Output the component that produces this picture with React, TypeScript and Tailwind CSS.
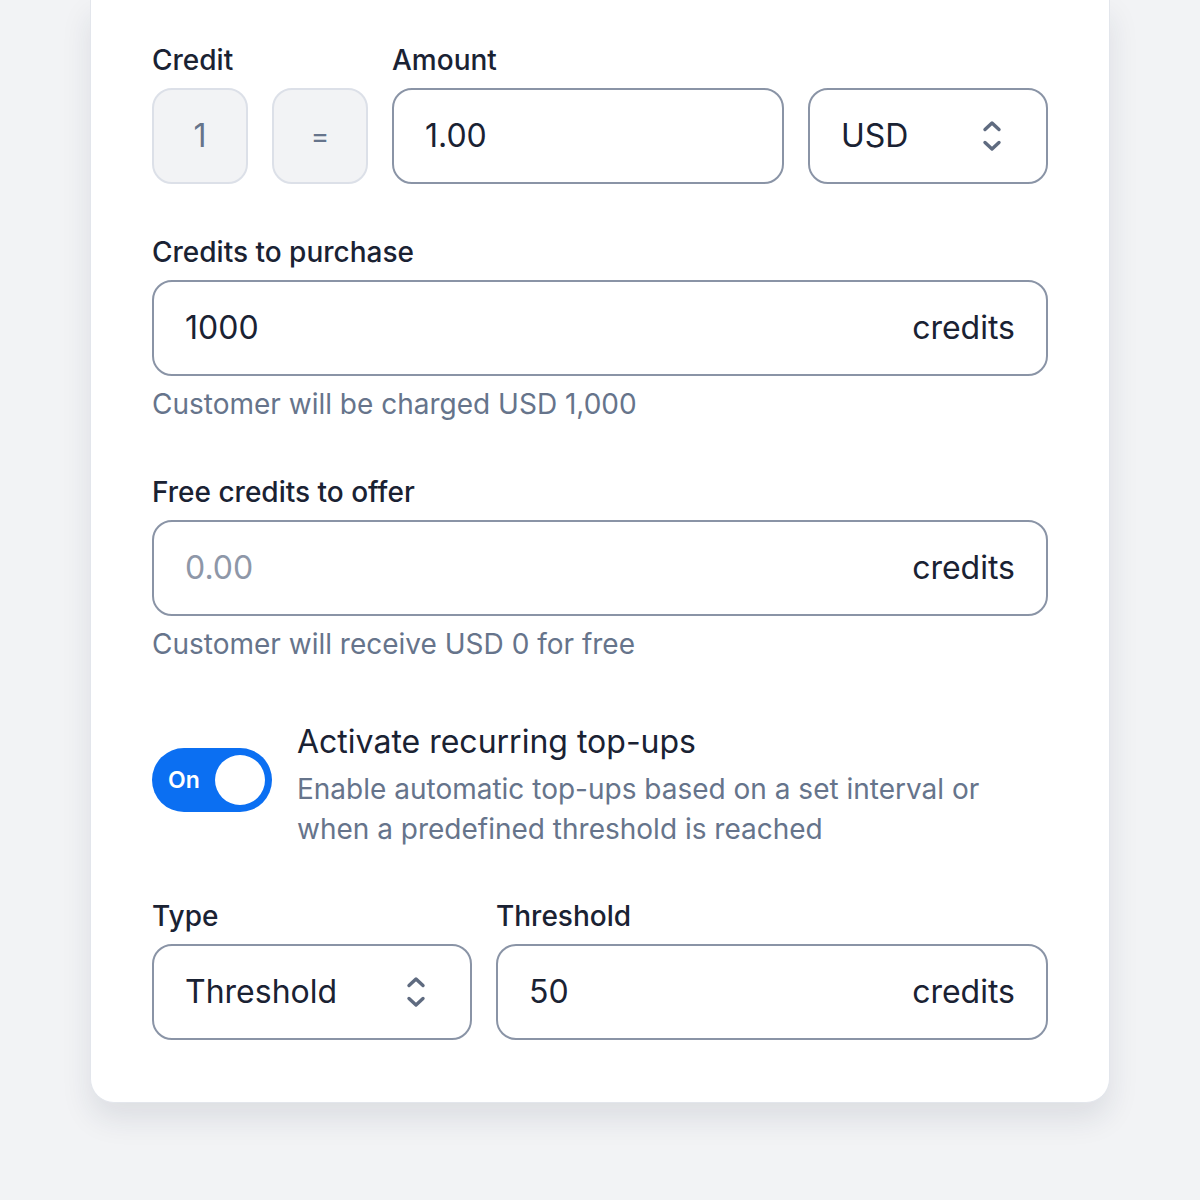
function UpDown() {
  return (
    <svg width="20" height="32" viewBox="0 0 20 32" fill="none" stroke="#5f6b80" strokeWidth="3.4" strokeLinecap="round" strokeLinejoin="round">
      <polyline points="3,9.5 10,3 17,9.5" />
      <polyline points="3,22.5 10,29 17,22.5" />
    </svg>
  )
}

function Label({ children }: { children: React.ReactNode }) {
  return <div className="text-[28px] leading-[36px] font-medium text-[#1a2233] mb-[10px]">{children}</div>
}

function Field({ value, suffix, placeholder }: { value?: string; suffix?: string; placeholder?: string }) {
  return (
    <div className="h-[96px] flex items-center justify-between px-[31px] rounded-[20px] border-2 border-[#8a94a6] bg-white">
      {value ? (
        <span className="text-[32px] text-[#1a2233]">{value}</span>
      ) : (
        <span className="text-[32px] text-[#8e97a8]">{placeholder}</span>
      )}
      {suffix && <span className="text-[32px] text-[#1a2233]">{suffix}</span>}
    </div>
  )
}

function Select({ value }: { value: string }) {
  return (
    <div className="h-[96px] flex items-center justify-between pl-[31px] pr-[44px] rounded-[20px] border-2 border-[#8a94a6] bg-white">
      <span className="text-[32px] text-[#1a2233]">{value}</span>
      <UpDown />
    </div>
  )
}

function Helper({ children }: { children: React.ReactNode }) {
  return <div className="mt-[10px] text-[28px] leading-[36px] text-[#66748b]">{children}</div>
}

export default function App() {
  return (
    <div className="min-h-[1200px] bg-[#f2f3f5] px-[90px]" style={{ fontFamily: "Inter, 'Noto Sans', sans-serif" }}>
      <div className="bg-white rounded-b-[24px] border border-t-0 border-[#e3e6ec] shadow-[0_16px_30px_rgba(30,40,70,0.10)] px-[61px] pt-[42px] pb-[62px]">
        <div className="flex gap-[24px]">
          <div>
            <Label>Credit</Label>
            <div className="flex gap-[24px]">
              <div className="w-[96px] h-[96px] rounded-[20px] border-2 border-[#dce0e8] bg-[#f2f3f5] flex items-center justify-center text-[32px] text-[#66748b]">1</div>
              <div className="w-[96px] h-[96px] rounded-[20px] border-2 border-[#dce0e8] bg-[#f2f3f5] flex items-center justify-center text-[28px] text-[#66748b]">=</div>
            </div>
          </div>
          <div className="w-[392px]">
            <Label>Amount</Label>
            <Field value="1.00" />
          </div>
          <div className="w-[240px] pt-[46px]">
            <Select value="USD" />
          </div>
        </div>

        <div className="mt-[50px]">
          <Label>Credits to purchase</Label>
          <Field value="1000" suffix="credits" />
          <Helper>Customer will be charged USD 1,000</Helper>
        </div>

        <div className="mt-[52px]">
          <Label>Free credits to offer</Label>
          <Field placeholder="0.00" suffix="credits" />
          <Helper>Customer will receive USD 0 for free</Helper>
        </div>

        <div className="mt-[60px] flex gap-[25px]">
          <div className="mt-[26px] w-[120px] h-[64px] shrink-0 rounded-full bg-[#0b6ff2] flex items-center justify-between pl-[16px] pr-[7px]">
            <span className="text-[23px] font-semibold text-white">On</span>
            <div className="w-[50px] h-[50px] rounded-full bg-white" />
          </div>
          <div>
            <div className="text-[32px] leading-[40px] text-[#1a2233]">Activate recurring top-ups</div>
            <div className="mt-[7px] text-[28px] leading-[40px] text-[#66748b]">
              Enable automatic top-ups based on a set interval or
              <br />
              when a predefined threshold is reached
            </div>
          </div>
        </div>

        <div className="mt-[49px] flex gap-[24px]">
          <div className="w-[320px]">
            <Label>Type</Label>
            <Select value="Threshold" />
          </div>
          <div className="flex-1">
            <Label>Threshold</Label>
            <Field value="50" suffix="credits" />
          </div>
        </div>
      </div>
    </div>
  )
}
